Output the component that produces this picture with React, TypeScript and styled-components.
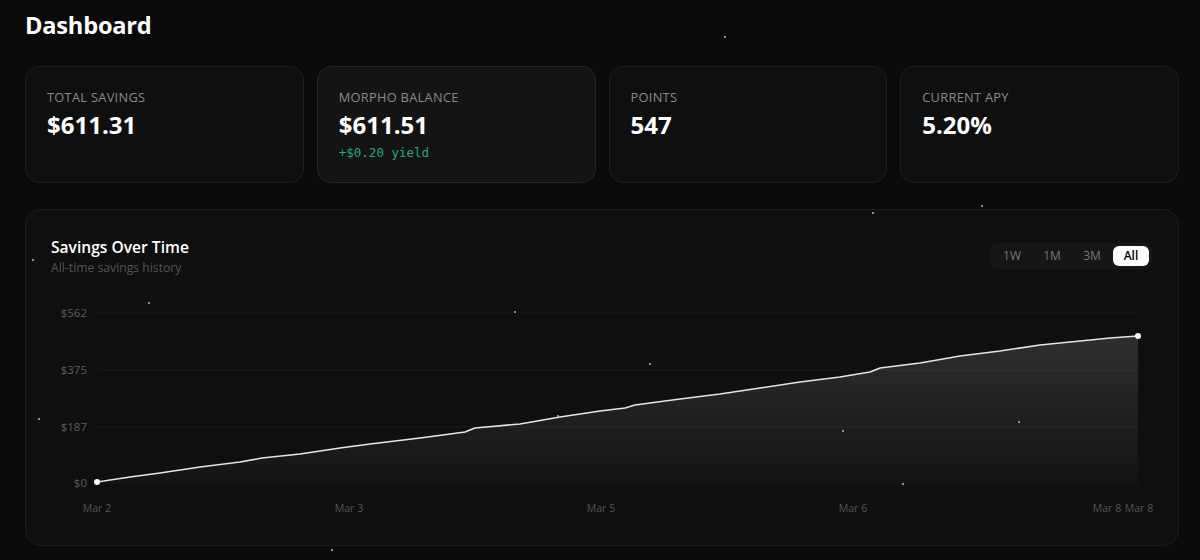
import styled, { createGlobalStyle } from "styled-components";

const GlobalStyle = createGlobalStyle`
  html, body {
    margin: 0;
    padding: 0;
    background: #0a0a0a;
    font-family: "Open Sans", "Noto Sans", sans-serif;
    color: #fff;
  }
`

const Page = styled.div`
  position: relative;
  width: 1200px;
  height: 560px;
  overflow: hidden;
  box-sizing: border-box;
  padding: 9px 21px 0 25px;
`

const Title = styled.h1`
  margin: 0;
  font-size: 23.6px;
  line-height: 32px;
  font-weight: 700;
  letter-spacing: -0.2px;
`

const StatRow = styled.div`
  display: grid;
  grid-template-columns: repeat(4, 1fr);
  gap: 13px;
  margin-top: 25px;
`

const StatCard = styled.div<{ $active?: boolean }>`
  height: 117px;
  box-sizing: border-box;
  padding: 22px 21px;
  border-radius: 14px;
  background: ${p => p.$active ? "#141414" : "#0f0f0f"};
  border: 1px solid ${p => p.$active ? "#262626" : "#1d1d1d"};
`

const StatLabel = styled.div`
  font-size: 12.8px;
  line-height: 16px;
  color: #8a8a8a;
  letter-spacing: 0.3px;
  text-transform: uppercase;
`

const StatValue = styled.div`
  margin-top: 5px;
  font-size: 24px;
  line-height: 30px;
  font-weight: 700;
`

const Yield = styled.div`
  margin-top: 5px;
  font-family: "DejaVu Sans Mono", "Liberation Mono", monospace;
  font-size: 12.5px;
  color: #2aa876;
`

const ChartCard = styled.div`
  margin-top: 26px;
  height: 337px;
  box-sizing: border-box;
  padding: 27px 26px 0 25px;
  border-radius: 16px;
  background: #0f0f0f;
  border: 1px solid #1d1d1d;
`

const ChartHeader = styled.div`
  display: flex;
  justify-content: space-between;
  align-items: flex-start;
`

const ChartTitle = styled.div`
  font-size: 15.6px;
  line-height: 20px;
  font-weight: 600;
`

const ChartSub = styled.div`
  margin-top: 3px;
  font-size: 12.2px;
  line-height: 16px;
  color: #555;
`

const Tabs = styled.div`
  display: flex;
  margin-top: 6px;
  padding: 3px;
  gap: 2px;
  border-radius: 8px;
  background: #161616;
`

const Tab = styled.button<{ $active?: boolean }>`
  border: none;
  outline: none;
  cursor: pointer;
  font-family: inherit;
  font-size: 12px;
  line-height: 14px;
  padding: 3px 0;
  width: ${p => p.$active ? "36px" : "38px"};
  border-radius: 6px;
  background: ${p => p.$active ? "#fff" : "transparent"};
  color: ${p => p.$active ? "#000" : "#777"};
  font-weight: ${p => p.$active ? 600 : 500};
`

const ChartSvg = styled.svg`
  display: block;
  margin-top: 13px;
  overflow: visible;
`

const Star = styled.span`
  position: absolute;
  width: 2px;
  height: 2px;
  border-radius: 50%;
  background: #bbb;
  pointer-events: none;
`

// page coordinates of the plotted points
const points: [number, number][] = [
    [97, 483], [130, 478], [160, 474], [200, 468], [240, 463], [262, 459], [300, 455],
    [340, 449], [370, 445], [420, 439], [465, 433], [475, 429], [520, 425], [560, 418],
    [600, 412], [625, 409], [635, 406], [680, 400], [720, 395], [760, 389], [800, 383],
    [840, 378], [870, 373], [880, 369], [920, 364], [960, 357], [1000, 352], [1040, 346],
    [1080, 342], [1110, 339], [1138, 337],
]

const OX = 51
const OY = 290

const yTicks = [{label: "$562", y: 314}, {label: "$375", y: 371}, {label: "$187", y: 428}, {label: "$0", y: 484}]
const xTicks = [{label: "Mar 2", x: 97}, {label: "Mar 3", x: 349}, {label: "Mar 5", x: 601}, {label: "Mar 6", x: 853}, {label: "Mar 8", x: 1107}, {label: "Mar 8", x: 1139}]

const stars = [
    [724, 36], [148, 302], [38, 418], [557, 415], [842, 430], [872, 212], [981, 205],
    [1018, 421], [331, 549], [902, 483], [514, 311], [649, 363], [32, 259],
]

const stats = [
    {label: "Total Savings", value: "$611.31"},
    {label: "Morpho Balance", value: "$611.51", yieldText: "+$0.20 yield", active: true},
    {label: "Points", value: "547"},
    {label: "Current APY", value: "5.20%"},
]

const SavingsChart = () => {
    const pts = points.map(([x, y]) => [x - OX, y - OY])
    const line = pts.map((p, i) => (i === 0 ? "M" : "L") + p[0] + " " + p[1]).join(" ")
    const baseY = 483 - OY
    const area = line + ` L${pts[pts.length - 1][0]} ${baseY} L${pts[0][0]} ${baseY} Z`
    const first = pts[0]
    const last = pts[pts.length - 1]

    return (
        <ChartSvg width={1102} height={232}>
            <defs>
                <linearGradient id="fillGrad" x1="0" y1="0" x2="0" y2="1">
                    <stop offset="0%" stopColor="#ffffff" stopOpacity="0.13"/>
                    <stop offset="100%" stopColor="#ffffff" stopOpacity="0.02"/>
                </linearGradient>
            </defs>
            {yTicks.map(t => (
                <g key={t.label}>
                    <line x1={46} x2={1087} y1={t.y - OY} y2={t.y - OY} stroke="#1b1b1b" strokeWidth={1}/>
                    <text x={36} y={t.y - OY + 4} textAnchor="end" fill="#5e5e5e" fontSize={11.5}
                          fontFamily="Open Sans, sans-serif">{t.label}</text>
                </g>
            ))}
            <path d={area} fill="url(#fillGrad)"/>
            <path d={line} fill="none" stroke="#e6e6e6" strokeWidth={1.6} strokeLinejoin="round"/>
            <circle cx={first[0]} cy={first[1]} r={3} fill="#fff"/>
            <circle cx={last[0]} cy={last[1]} r={3} fill="#fff"/>
            {xTicks.map((t, i) => (
                <text key={i} x={t.x - OX} y={509 - OY + 4} textAnchor="middle" fill="#555" fontSize={10.5}
                      fontFamily="Open Sans, sans-serif">{t.label}</text>
            ))}
        </ChartSvg>
    )
}

const App = () => {
    return (
        <>
            <GlobalStyle/>
            <Page>
                <Title>Dashboard</Title>
                <StatRow>
                    {stats.map(s => (
                        <StatCard key={s.label} $active={s.active}>
                            <StatLabel>{s.label}</StatLabel>
                            <StatValue>{s.value}</StatValue>
                            {s.yieldText && <Yield>{s.yieldText}</Yield>}
                        </StatCard>
                    ))}
                </StatRow>
                <ChartCard>
                    <ChartHeader>
                        <div>
                            <ChartTitle>Savings Over Time</ChartTitle>
                            <ChartSub>All-time savings history</ChartSub>
                        </div>
                        <Tabs>
                            <Tab>1W</Tab>
                            <Tab>1M</Tab>
                            <Tab>3M</Tab>
                            <Tab $active>All</Tab>
                        </Tabs>
                    </ChartHeader>
                    <SavingsChart/>
                </ChartCard>
                {stars.map(([x, y], i) => (
                    <Star key={i} style={{left: x, top: y}}/>
                ))}
            </Page>
        </>
    )
}

export default App;
